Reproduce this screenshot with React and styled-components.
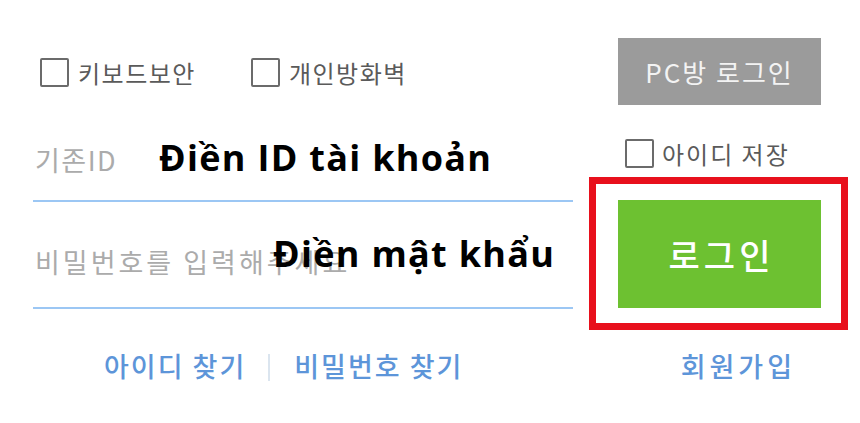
import React from "react";
import styled, { createGlobalStyle } from "styled-components";

const GlobalStyle = createGlobalStyle`
  html, body {
    margin: 0;
    padding: 0;
    background: #ffffff;
  }
  body {
    font-family: "Noto Sans CJK KR", "Noto Sans", sans-serif;
  }
`;

const PageStyles = styled.div`
  width: 860px;
  height: 423px;
  padding-top: 38px;
  box-sizing: border-box;
  overflow: hidden;
`;

const MainStyles = styled.div`
  display: flex;
  padding-left: 33px;
  gap: 16px;
`;

const LeftColumnStyles = styled.div`
  width: 540px;
  display: flex;
  flex-direction: column;
`;

const RightColumnStyles = styled.div`
  width: 259px;
  display: flex;
  flex-direction: column;
`;

const CheckRowStyles = styled.div`
  height: 67px;
  display: flex;
  align-items: center;
  padding-left: 7px;
  padding-top: 2px;
  box-sizing: border-box;
  gap: 55px;
`;

const CheckLabelStyles = styled.label`
  display: flex;
  align-items: center;
  gap: ${props => props.gap || 9}px;
  font-size: ${props => props.size || 24}px;
  letter-spacing: ${props => props.spacing || 0}px;
  color: #5a5a5a;
  line-height: 1;
  cursor: pointer;
`;

const BoxStyles = styled.span`
  display: inline-block;
  width: 25px;
  height: 25px;
  border: 2px solid #6b6b6b;
  border-radius: 2px;
  background: #fff;
  flex-shrink: 0;
`;

const FieldStyles = styled.div`
  position: relative;
  height: ${props => props.height}px;
  border-bottom: 2px solid #9cc7f4;
  display: flex;
  align-items: center;
  padding-top: ${props => props.offset}px;
  padding-left: 2px;
  box-sizing: border-box;
`;

const PlaceholderStyles = styled.span`
  font-size: 27px;
  color: #ababab;
  letter-spacing: ${props => props.spacing || 0}px;
`;

const NoteStyles = styled.span`
  position: absolute;
  left: ${props => props.left}px;
  top: ${props => props.top}px;
  font-family: "Open Sans", "DejaVu Sans", sans-serif;
  font-weight: 700;
  font-size: 36px;
  letter-spacing: 1.3px;
  color: #000;
  white-space: nowrap;
  line-height: 1;
`;

const PcButtonStyles = styled.button`
  margin-left: 29px;
  width: 203px;
  height: 67px;
  border: none;
  background: #9b9b9b;
  color: #f3f3f3;
  font-family: "Noto Sans CJK KR", sans-serif;
  font-size: 26px;
  letter-spacing: 2px;
  padding: 0;
`;

const SaveRowStyles = styled.div`
  height: 72px;
  display: flex;
  align-items: flex-end;
  padding-left: 36px;
  padding-bottom: 9px;
  box-sizing: border-box;
`;

const HighlightStyles = styled.div`
  height: 153px;
  border: 7px solid #e8101c;
  box-sizing: border-box;
  padding: 16px 20px 15px 22px;
  display: flex;
`;

const LoginButtonStyles = styled.button`
  flex: 1;
  border: none;
  background: #6dc131;
  color: #ffffff;
  font-family: "Noto Sans CJK KR", sans-serif;
  font-size: 34px;
  font-weight: 500;
  letter-spacing: 4px;
  padding: 0 0 0 4px;
`;

const FooterStyles = styled.div`
  display: flex;
  align-items: center;
  height: 70px;
  padding-left: 104px;
`;

const LinkStyles = styled.a`
  font-size: 27px;
  font-weight: 500;
  color: #5d95d9;
  text-decoration: none;
  letter-spacing: ${props => props.spacing || 2}px;
`;

const DividerStyles = styled.span`
  width: 2px;
  height: 27px;
  margin: 5px 24px 0 22px;
  background: #dbe5ef;
`;

const SignUpStyles = styled(LinkStyles)`
  margin-left: auto;
  margin-right: 64px;
`;

export default function App() {
  return (
    <>
      <GlobalStyle />
      <PageStyles>
        <MainStyles>
          <LeftColumnStyles>
            <CheckRowStyles>
              <CheckLabelStyles spacing={1.5}>
                <BoxStyles />
                키보드보안
              </CheckLabelStyles>
              <CheckLabelStyles spacing={1.5}>
                <BoxStyles />
                개인방화벽
              </CheckLabelStyles>
            </CheckRowStyles>
            <FieldStyles height={97} offset={14}>
              <PlaceholderStyles spacing={1.5}>기존ID</PlaceholderStyles>
              <NoteStyles left={126} top={35}>
                Điền ID tài khoản
              </NoteStyles>
            </FieldStyles>
            <FieldStyles height={107} offset={14}>
              <PlaceholderStyles spacing={3}>비밀번호를 입력해주세요</PlaceholderStyles>
              <NoteStyles left={240} top={34}>
                Điền mật khẩu
              </NoteStyles>
            </FieldStyles>
          </LeftColumnStyles>
          <RightColumnStyles>
            <PcButtonStyles>PC방 로그인</PcButtonStyles>
            <SaveRowStyles>
              <CheckLabelStyles gap={8} spacing={2}>
                <BoxStyles />
                아이디 저장
              </CheckLabelStyles>
            </SaveRowStyles>
            <HighlightStyles>
              <LoginButtonStyles>로그인</LoginButtonStyles>
            </HighlightStyles>
          </RightColumnStyles>
        </MainStyles>
        <FooterStyles>
          <LinkStyles href="#">아이디 찾기</LinkStyles>
          <DividerStyles />
          <LinkStyles href="#">비밀번호 찾기</LinkStyles>
          <SignUpStyles href="#" spacing={4}>회원가입</SignUpStyles>
        </FooterStyles>
      </PageStyles>
    </>
  );
}
